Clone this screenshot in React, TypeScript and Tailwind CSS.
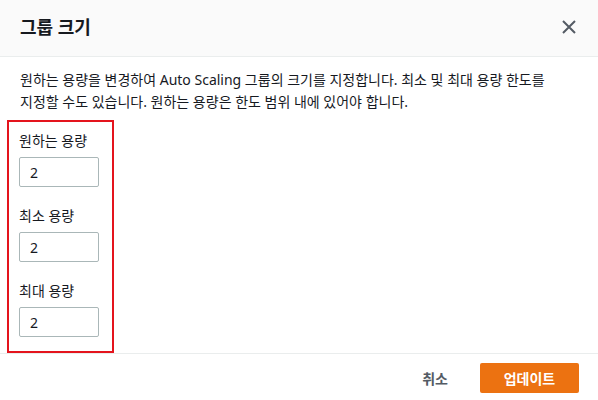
import React from "react";

export default function App() {
  const fields = ["원하는 용량", "최소 용량", "최대 용량"];
  return (
    <div
      className="w-[598px] h-[400px] bg-white flex flex-col text-[#16191f] overflow-hidden"
      style={{ fontFamily: '"Noto Sans", "Noto Sans CJK KR", sans-serif' }}
    >
      <div className="h-[57px] shrink-0 bg-[#fafafa] border-b border-[#eaeded] flex items-center justify-between pl-5 pr-[22px]">
        <h2 className="text-[18px] font-bold leading-[22px] mt-[-2px]">그룹 크기</h2>
        <svg width="14" height="14" viewBox="0 0 14 14" className="mt-[-3px]">
          <path d="M1 1 L13 13 M13 1 L1 13" stroke="#545b64" strokeWidth="2" fill="none" />
        </svg>
      </div>
      <div className="flex-1 px-5 pt-[12px] flex flex-col">
        <p className="text-[14px] leading-[22px] break-keep">
          원하는 용량을 변경하여 Auto Scaling 그룹의 크기를 지정합니다. 최소 및 최대 용량 한도를 지정할 수도 있습니다. 원하는 용량은 한도 범위 내에 있어야 합니다.
        </p>
        <div className="relative z-10 mt-[7px] ml-[-13px] w-[107px] border-2 border-[#e4141d] pl-[10px] pt-[9px] pb-[14px] flex flex-col gap-[19px]">
          {fields.map((f) => (
            <div key={f} className="flex flex-col">
              <label className="block text-[14px] leading-[20px] mb-[6px]">{f}</label>
              <div className="w-[80px] h-[30px] border border-[#aab7b8] rounded-[2px] bg-white flex items-center px-[10px] text-[14px]">
                2
              </div>
            </div>
          ))}
        </div>
      </div>
      <div className="h-[48px] shrink-0 border-t border-[#eaeded] flex items-start justify-end pr-[19px] pt-[9px]">
        <button className="h-[30px] px-5 text-[14px] font-bold text-[#545b64] mr-[12px]">취소</button>
        <button className="w-[99px] h-[30px] rounded-[2px] bg-[#ec7211] text-white text-[14px] font-bold">
          업데이트
        </button>
      </div>
    </div>
  );
}
